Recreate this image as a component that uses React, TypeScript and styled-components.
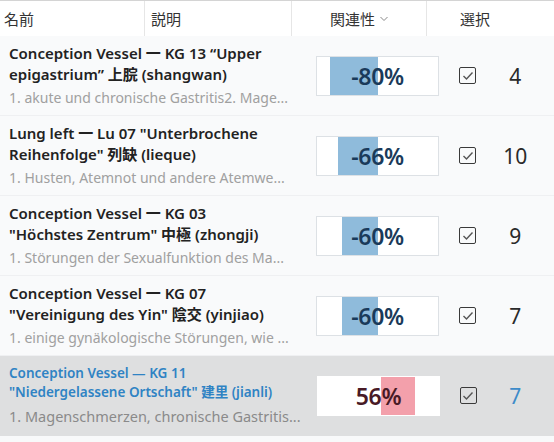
import React from "react";
import styled, { createGlobalStyle } from "styled-components";

const Global = createGlobalStyle`
  html, body { margin: 0; padding: 0; background: #f8f9fa; }
  body { font-family: "Noto Sans", "Noto Sans CJK JP", sans-serif; color: #222; }
`;

const Page = styled.div`
  width: 554px;
  height: 442px;
  overflow: hidden;
  background: #f8f9fa;
`;

const Header = styled.div`
  display: grid;
  grid-template-columns: 145px 147px 135px 1fr;
  height: 35px;
  border-top: 1px solid #d4d4d4;
  background: #fff;
  font-size: 15px;
  color: #333;
`;

const HeadCell = styled.div<{ $align?: string; $divider?: boolean; $pad?: number }>`
  display: flex;
  align-items: center;
  justify-content: ${(p) => p.$align || "flex-start"};
  padding: 0 ${(p) => (p.$align === "flex-end" ? "38px" : "4px")} 0 ${(p) => p.$pad ?? 4}px;
  border-right: ${(p) => (p.$divider ? "1px solid #e6e6e6" : "none")};
  gap: 5px;
`;

const Chevron = styled.svg`
  width: 8px;
  height: 6px;
  margin-top: 1px;
`;

const Row = styled.div<{ $selected?: boolean }>`
  display: flex;
  align-items: center;
  height: 80px;
  background: ${(p) => (p.$selected ? "#dedfe0" : "#f9fafb")};
  border-bottom: 1px solid ${(p) => (p.$selected ? "#dedfe0" : "#eff0f2")};
  box-sizing: border-box;
`;

const NameCell = styled.div`
  width: 300px;
  box-sizing: border-box;
  padding-left: 9px;
  display: flex;
  flex-direction: column;
`;

const Title = styled.div<{ $selected?: boolean }>`
  font-size: ${(p) => (p.$selected ? "13.5px" : "15px")};
  line-height: ${(p) => (p.$selected ? "19px" : "21.5px")};
  font-weight: 600;
  color: ${(p) => (p.$selected ? "#2f83c4" : "#222")};
`;

const Desc = styled.div<{ $selected?: boolean }>`
  font-size: ${(p) => (p.$selected ? "14.5px" : "14px")};
  line-height: 22px;
  color: ${(p) => (p.$selected ? "#8a8a8a" : "#a0a0a0")};
  white-space: nowrap;
  margin-top: ${(p) => (p.$selected ? "3px" : "1px")};
`;

const BarBox = styled.div<{ $selected?: boolean }>`
  position: relative;
  margin-left: 17px;
  width: 124px;
  height: 40px;
  box-sizing: border-box;
  background: #fff;
  border: 1px solid ${(p) => (p.$selected ? "#fff" : "#dde1e5")};
  display: flex;
  align-items: center;
  justify-content: center;
`;

const Fill = styled.div<{ $neg: boolean }>`
  position: absolute;
  top: 0;
  bottom: 0;
  background: ${(p) => (p.$neg ? "#8fbbdb" : "#f3a0ab")};
`;

const BarText = styled.span<{ $neg: boolean }>`
  position: relative;
  font-size: 23px;
  font-weight: 600;
  letter-spacing: -0.3px;
  color: ${(p) => (p.$neg ? "#1a3a5a" : "#481a26")};
`;

const Check = styled.div`
  margin-left: 20px;
  width: 17px;
  height: 17px;
  box-sizing: border-box;
  border: 1.5px solid #3a3a3a;
  border-radius: 2px;
  display: flex;
  align-items: center;
  justify-content: center;
  background: transparent;
`;

const Count = styled.div<{ $selected?: boolean }>`
  width: 78px;
  text-align: center;
  font-size: 21px;
  font-weight: 400;
  color: ${(p) => (p.$selected ? "#3d8bc9" : "#2a2a2a")};
`;

type Item = {
  title: string[];
  desc: string;
  value: number;
  count: number;
  selected?: boolean;
};

const items: Item[] = [
  {
    title: ["Conception Vessel 一 KG 13 “Upper", "epigastrium” 上脘 (shangwan)"],
    desc: "1. akute und chronische Gastritis2. Mage...",
    value: -80,
    count: 4,
  },
  {
    title: ["Lung left 一 Lu 07 \"Unterbrochene", "Reihenfolge\" 列缺 (lieque)"],
    desc: "1. Husten, Atemnot und andere Atemwe...",
    value: -66,
    count: 10,
  },
  {
    title: ["Conception Vessel 一 KG 03", "\"Höchstes Zentrum\" 中極 (zhongji)"],
    desc: "1. Störungen der Sexualfunktion des Ma...",
    value: -60,
    count: 9,
  },
  {
    title: ["Conception Vessel 一 KG 07", "\"Vereinigung des Yin\" 陰交 (yinjiao)"],
    desc: "1. einige gynäkologische Störungen, wie ...",
    value: -60,
    count: 7,
  },
  {
    title: ["Conception Vessel — KG 11", "\"Niedergelassene Ortschaft\" 建里 (jianli)"],
    desc: "1. Magenschmerzen, chronische Gastritis...",
    value: 56,
    count: 7,
    selected: true,
  },
];

const HALF = 60;

function Bar({ value, selected }: { value: number; selected?: boolean }) {
  const neg = value < 0;
  const w = (Math.abs(value) / 100) * HALF;
  const style = neg ? { left: 61 - w, width: w } : { left: 63, width: w };
  return (
    <BarBox $selected={selected}>
      <Fill $neg={neg} style={style} />
      <BarText $neg={neg}>{value}%</BarText>
    </BarBox>
  );
}

export default function App() {
  return (
    <Page>
      <Global />
      <Header>
        <HeadCell $divider>名前</HeadCell>
        <HeadCell $divider $pad={6}>説明</HeadCell>
        <HeadCell $divider $align="flex-end">
          関連性
          <Chevron viewBox="0 0 8 6">
            <path d="M0.5 1 L4 4.5 L7.5 1" fill="none" stroke="#888" strokeWidth="1" />
          </Chevron>
        </HeadCell>
        <HeadCell $pad={33}>選択</HeadCell>
      </Header>
      {items.map((it, i) => (
        <Row key={i} $selected={it.selected}>
          <NameCell>
            <Title $selected={it.selected}>
              {it.title[0]}
              <br />
              {it.title[1]}
            </Title>
            <Desc $selected={it.selected}>{it.desc}</Desc>
          </NameCell>
          <Bar value={it.value} selected={it.selected} />
          <Check>
            <svg width="12" height="10" viewBox="0 0 12 10">
              <path d="M1.5 5 L4.5 8 L10.5 1.5" fill="none" stroke="#555" strokeWidth="1.4" />
            </svg>
          </Check>
          <Count $selected={it.selected}>{it.count}</Count>
        </Row>
      ))}
    </Page>
  );
}
